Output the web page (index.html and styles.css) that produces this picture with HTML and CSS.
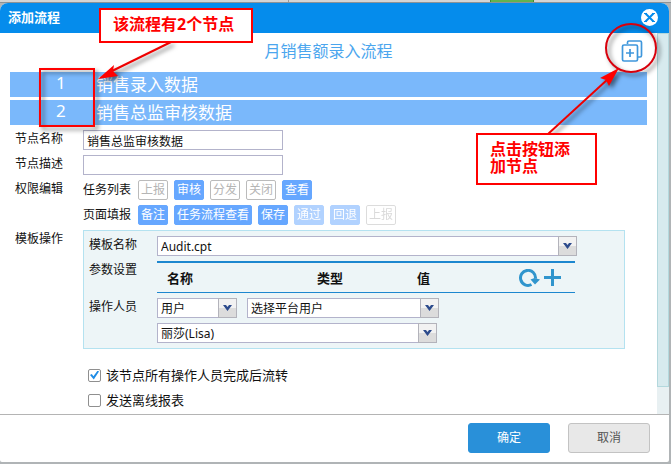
FILE: index.html
```html
<!DOCTYPE html>
<html lang="zh-CN">
<head>
    <meta charset="UTF-8">
    <meta name="viewport" content="width=device-width, initial-scale=1.0">
    <title>添加流程</title>
    <link rel="stylesheet" href="styles.css">
</head>
<body>
    <div class="page-strip">
        <span class="strip-left"></span>
        <span class="strip-mid"></span>
        <span class="strip-tab"></span>
    </div>

    <div class="dialog">
        <div class="dialog-header">
            <span>添加流程</span>
            <button type="button" class="close-btn" aria-label="关闭">
                <svg width="17" height="17" viewBox="0 0 17 17">
                    <circle cx="8.5" cy="8.5" r="8.5" fill="#fff"/>
                    <path d="M3 4.500h3M11 4.500h3M3 12.500h3M11 12.500h3" stroke="#058cec" stroke-width="1"/>
                    <path d="M4.500 4.500l8 8M12.500 4.500l-8 8" stroke="#058cec" stroke-width="2"/>
                </svg>
            </button>
        </div>

        <div class="dialog-body">
            <form class="content" id="flowForm">
                <div class="flow-title">
                    <span>月销售额录入流程</span>
                    <button type="button" class="add-node" aria-label="添加节点">
                        <svg width="22" height="22" viewBox="0 0 22 22" fill="none" stroke="#3f97dc" stroke-width="1.700">
                            <path d="M6.500 4V2.500Q6.500 1 8 1H19Q20.500 1 20.500 2.500V15.500Q20.500 17 19 17H17"/>
                            <rect x="1.500" y="5" width="15" height="16" rx="1.500"/>
                            <path d="M5 13h8M9 9v8"/>
                        </svg>
                    </button>
                </div>

                <!-- 节点列表 -->
                <div class="node"><span class="num">1</span><span>销售录入数据</span></div>
                <div class="node"><span class="num">2</span><span>销售总监审核数据</span></div>

                <div class="row">
                    <label class="label" for="nodeName">节点名称</label>
                    <input class="text" id="nodeName" type="text" value="销售总监审核数据">
                </div>
                <div class="row">
                    <label class="label" for="nodeDesc">节点描述</label>
                    <input class="text" id="nodeDesc" type="text">
                </div>
                <div class="row">
                    <span class="label">权限编辑</span>
                    <div class="auth">
                        <div class="tags">
                            <span class="tags-name">任务列表</span>
                            <button type="button" class="tag">上报</button>
                            <button type="button" class="tag on">审核</button>
                            <button type="button" class="tag">分发</button>
                            <button type="button" class="tag">关闭</button>
                            <button type="button" class="tag on">查看</button>
                        </div>
                        <div class="tags">
                            <span class="tags-name">页面填报</span>
                            <button type="button" class="tag on">备注</button>
                            <button type="button" class="tag on">任务流程查看</button>
                            <button type="button" class="tag on">保存</button>
                            <button type="button" class="tag on" disabled>通过</button>
                            <button type="button" class="tag on" disabled>回退</button>
                            <button type="button" class="tag" disabled>上报</button>
                        </div>
                    </div>
                </div>
                <div class="row">
                    <span class="label">模板操作</span>
                    <div class="panel">
                        <label class="label" for="tpl">模板名称</label>
                        <div class="combo combo-tpl">
                            <select id="tpl"><option>Audit.cpt</option></select>
                            <span class="arrow"><svg width="9" height="6" viewBox="0 0 9 6"><path d="M0 0h3l1.500 2L6 0h3L4.500 6z" fill="#2d4b8c"/></svg></span>
                        </div>

                        <span class="label">参数设置</span>
                        <div class="params">
                            <table>
                                <tr><th class="c-name">名称</th><th class="c-type">类型</th><th>值</th></tr>
                            </table>
                            <button type="button" class="icon-btn" aria-label="刷新">
                                <svg width="21" height="18" viewBox="0 0 21 18">
                                    <path d="M12.500 15.500A7.500 7.500 0 1 1 16.500 9.500" fill="none" stroke="#3095cd" stroke-width="3"/>
                                    <path d="M11.500 10.500l4-1.500 5.500 1.500-5 5z" fill="#3095cd"/>
                                </svg>
                            </button>
                            <button type="button" class="icon-btn" aria-label="添加">
                                <svg width="17" height="17" viewBox="0 0 17 17"><path d="M0 8.500h17M8.500 0v17" stroke="#3095cd" stroke-width="3"/></svg>
                            </button>
                        </div>

                        <label class="label" for="userType">操作人员</label>
                        <div class="users">
                            <div class="combo combo-type">
                                <select id="userType"><option>用户</option></select>
                                <span class="arrow"><svg width="9" height="6" viewBox="0 0 9 6"><path d="M0 0h3l1.500 2L6 0h3L4.500 6z" fill="#2d4b8c"/></svg></span>
                            </div>
                            <div class="combo combo-platform">
                                <select aria-label="选择平台用户"><option>选择平台用户</option></select>
                                <span class="arrow"><svg width="9" height="6" viewBox="0 0 9 6"><path d="M0 0h3l1.500 2L6 0h3L4.500 6z" fill="#2d4b8c"/></svg></span>
                            </div>
                            <div class="combo combo-user">
                                <select aria-label="操作人员"><option>丽莎(Lisa)</option></select>
                                <span class="arrow"><svg width="9" height="6" viewBox="0 0 9 6"><path d="M0 0h3l1.500 2L6 0h3L4.500 6z" fill="#2d4b8c"/></svg></span>
                            </div>
                        </div>
                    </div>
                </div>

                <div class="checks">
                    <label><input type="checkbox" checked>该节点所有操作人员完成后流转</label>
                    <label><input type="checkbox">发送离线报表</label>
                </div>
            </form>
            <div class="scrollbar"><div class="thumb"></div></div>
        </div>

        <div class="dialog-footer">
            <button type="submit" form="flowForm" class="btn primary">确定</button>
            <button type="button" class="btn">取消</button>
        </div>
    </div>

    <!-- 标注 -->
    <div class="notes notes-left">
        <svg width="260" height="140" viewBox="0 0 260 140">
            <rect x="40" y="69" width="54" height="57" fill="none" stroke="#f00" stroke-width="2"/>
            <path d="M171 42L112 71" stroke="#e00" stroke-width="2"/>
            <path d="M98 79L114 65L113 71L118 76Z" fill="#f00"/>
        </svg>
        <div class="note note-nodes">该流程有2个节点</div>
    </div>
    <div class="notes notes-right">
        <svg width="200" height="140" viewBox="0 0 200 140">
            <ellipse cx="160" cy="48" rx="25" ry="24" fill="none" stroke="#d8000c" stroke-width="2"/>
            <path d="M77 134L137 79" stroke="#e00" stroke-width="2"/>
            <path d="M148 68L129 78L135 80L138 86Z" fill="#f00"/>
        </svg>
        <div class="note note-add">点击按钮添加节点</div>
    </div>
</body>
</html>
```

FILE: styles.css
```css
* {
    box-sizing: border-box;
}
body {
    margin: 0;
    position: relative;
    background: #b0b4b6;
    font-family: "Noto Sans", "Noto Sans CJK SC", sans-serif;
    font-size: 12px;
    line-height: 18px;
    color: #111;
}
button, input, select {
    font: inherit;
    color: inherit;
    margin: 0;
}
button {
    padding: 0;
    border: none;
    background: none;
    cursor: pointer;
}
svg {
    display: block;
}

/* 后面的页面 */
.page-strip {
    display: flex;
    height: 3px;
    background: #d4d4d4;
    border-bottom: 1px solid #8c9296;
}
.strip-left {
    width: 43%;
    border-right: 1px solid #999;
}
.strip-mid {
    width: 30%;
}
.strip-tab {
    width: 44px;
    background: #62b34f;
    border: solid #3f8a35;
    border-width: 0 1px;
}

.dialog {
    margin: 0 2px 2px 0;
    background: #fff;
    border-radius: 8px 8px 2px 2px;
    overflow: hidden;
}
.dialog-header {
    display: flex;
    justify-content: space-between;
    align-items: center;
    height: 30px;
    padding: 0 11px 2px 8px;
    background: #058cec;
    color: #fff;
    font-size: 13px;
    font-weight: bold;
}
.dialog-body {
    display: flex;
    border-bottom: 1px solid #b4b4b4;
}
.content {
    flex: 1;
    padding: 0 10px 4px;
}
.flow-title {
    display: grid;
    grid-template-columns: 22px 1fr 22px;
    align-items: center;
    height: 39px;
    padding: 0 4px 4px;
    text-align: center;
    font-size: 16px;
    color: #4ba6ee;
}
.flow-title span {
    grid-column: 2;
}
.node {
    display: flex;
    align-items: center;
    height: 25px;
    margin-bottom: 3px;
    background: #7ab8fb;
    color: #fff;
    font-size: 17px;
}
.num {
    width: 86px;
    padding-left: 46px;
    padding-bottom: 4px;
}

.row {
    display: flex;
    margin-top: 5px;
    padding-left: 5px;
}
.row > .label {
    width: 68px;
}
.text {
    width: 200px;
    height: 20px;
    padding: 2px 3px 0;
    border: 1px solid #b3b3cb;
    background: #fff;
}
.auth {
    display: grid;
    gap: 5px;
}
.tags {
    display: flex;
    align-items: center;
    gap: 6px;
}
.tags-name {
    width: 49px;
}
.tag {
    height: 20px;
    padding: 0 2px;
    border: 1px solid #bbb;
    border-radius: 2px;
    color: #b5b5b5;
    line-height: 18px;
}
.tag.on {
    background: #66a7ff;
    border-color: #66a7ff;
    color: #fff;
}
.tag:disabled {
    opacity: 0.5;
}

.panel {
    flex: 1;
    display: grid;
    grid-template-columns: 68px 1fr;
    row-gap: 5px;
    margin-right: 22px;
    padding: 5px;
    background: #edf5f7;
    border: 1px solid #b4e2f0;
}
.combo {
    position: relative;
    height: 20px;
}
.combo select {
    appearance: none;
    width: 100%;
    height: 20px;
    padding: 1px 20px 0 3px;
    border: 1px solid #b3b3cb;
    border-radius: 0;
    background: #fff;
}
.arrow {
    position: absolute;
    top: 0;
    right: 0;
    bottom: 0;
    width: 19px;
    display: flex;
    align-items: center;
    justify-content: center;
    border: 1px solid #b3b3bb;
    background: linear-gradient(#f2f2f2 50%, #dcdcdc 50%);
    pointer-events: none;
}
.combo-tpl {
    width: 420px;
}
.combo-type {
    width: 80px;
}
.combo-platform {
    width: 192px;
}
.combo-user {
    width: 280px;
}
.params {
    display: flex;
    align-items: center;
    gap: 4px;
    width: 418px;
    height: 32px;
    padding-right: 14px;
    border-top: 2px solid #1d87cf;
    border-bottom: 1px solid #1d87cf;
}
.params table {
    flex: 1;
    border-collapse: collapse;
    font-size: 13px;
}
.params th {
    padding: 0;
    text-align: left;
}
.params .c-name {
    width: 160px;
    padding-left: 10px;
}
.params .c-type {
    width: 100px;
}
.users {
    display: flex;
    flex-wrap: wrap;
    gap: 5px 10px;
}

.checks {
    display: grid;
    gap: 5px;
    margin-top: 16px;
    padding-left: 78px;
    font-size: 13px;
    line-height: 20px;
}
.checks label {
    display: flex;
    align-items: center;
    gap: 5px;
}
.checks input {
    appearance: none;
    display: grid;
    place-items: center;
    width: 13px;
    height: 13px;
    border: 1px solid #8f8f8f;
    border-radius: 2px;
    background: #fff;
}
.checks input:checked::before {
    content: "";
    width: 9px;
    height: 9px;
    background: #1e8ce6;
    clip-path: polygon(0 50%, 20% 40%, 38% 65%, 85% 0, 100% 10%, 42% 100%);
}

.scrollbar {
    width: 12px;
    background: #e8f0f2;
}
.thumb {
    height: 93%;
    background: #d7eaee;
    border: 1px solid #b3d8dd;
}

.dialog-footer {
    display: flex;
    justify-content: flex-end;
    gap: 18px;
    padding: 8px 19px 9px;
}
.btn {
    width: 82px;
    height: 30px;
    border: 1px solid #c3c3c3;
    border-radius: 3px;
    background: #e8e8e8;
    color: #555;
}
.btn.primary {
    background: #2990d9;
    border-color: #2990d9;
    color: #fff;
}

/* 标注浮在对话框上方 */
.notes {
    position: absolute;
    top: 0;
    pointer-events: none;
}
.notes-left {
    left: 0;
}
.notes-right {
    right: 0;
}
.notes svg {
    filter: drop-shadow(3px 3px 2px rgba(0, 0, 0, 0.5));
}
.note {
    position: absolute;
    border: 2px solid #f00;
    background: #fff;
    color: #f00;
    font-size: 16px;
    font-weight: bold;
    line-height: 17px;
}
.note-nodes {
    left: 99px;
    top: 8px;
    width: 154px;
    height: 35px;
    padding: 6px 12px;
    white-space: nowrap;
}
.note-add {
    left: 5px;
    top: 133px;
    width: 121px;
    height: 52px;
    padding: 6px 12px;
}
```
